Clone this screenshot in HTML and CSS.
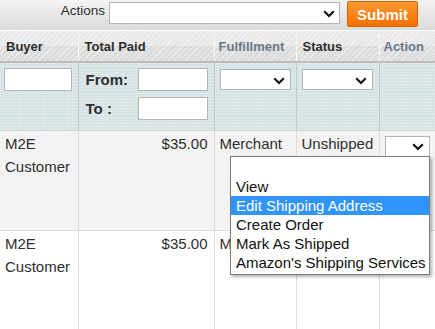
FILE: index.html
```html
<!DOCTYPE html>
<html lang="en">
<head>
    <meta charset="UTF-8">
    <title>Amazon Orders</title>
    <link rel="stylesheet" href="styles.css">
</head>
<body>
    <div class="toolbar">
        <span class="toolbar-label">Actions</span>
        <div class="select select-wide">
            <svg class="chevron" width="12" height="8" viewBox="0 0 12 8"><path d="M1.2 1.2 L6 6 L10.8 1.2" fill="none" stroke="#111" stroke-width="2.2"/></svg>
        </div>
        <button class="submit">Submit</button>
    </div>

    <div class="grid-wrap">
        <table class="grid">
            <colgroup>
                <col style="width: 78px">
                <col style="width: 136px">
                <col style="width: 82px">
                <col style="width: 83px">
                <col style="width: 56px">
            </colgroup>
            <thead>
                <tr class="headings">
                    <th>Buyer</th>
                    <th>Total Paid</th>
                    <th class="no-sort">Fulfillment</th>
                    <th>Status</th>
                    <th class="no-sort">Action</th>
                </tr>
                <tr class="filter">
                    <td><div class="input input-buyer"></div></td>
                    <td>
                        <div class="range">
                            <span class="range-label">From:</span>
                            <div class="input input-range"></div>
                            <span class="range-label">To :</span>
                            <div class="input input-range"></div>
                        </div>
                    </td>
                    <td class="pad-sm"><div class="select select-filter">
                        <svg class="chevron" width="12" height="8" viewBox="0 0 12 8"><path d="M1.2 1.2 L6 6 L10.8 1.2" fill="none" stroke="#111" stroke-width="2.2"/></svg>
                    </div></td>
                    <td class="pad-sm"><div class="select select-filter">
                        <svg class="chevron" width="12" height="8" viewBox="0 0 12 8"><path d="M1.2 1.2 L6 6 L10.8 1.2" fill="none" stroke="#111" stroke-width="2.2"/></svg>
                    </div></td>
                    <td></td>
                </tr>
            </thead>
            <tbody>
                <tr class="row row-even">
                    <td>M2E<br>Customer</td>
                    <td class="num">$35.00</td>
                    <td>Merchant</td>
                    <td>Unshipped</td>
                    <td class="pad-sm"><div class="select select-action">
                        <svg class="chevron" width="12" height="8" viewBox="0 0 12 8"><path d="M1.2 1.2 L6 6 L10.8 1.2" fill="none" stroke="#111" stroke-width="2.2"/></svg>
                    </div></td>
                </tr>
                <tr class="row">
                    <td>M2E<br>Customer</td>
                    <td class="num">$35.00</td>
                    <td>Merchant</td>
                    <td>Unshipped</td>
                    <td></td>
                </tr>
            </tbody>
        </table>

        <ul class="menu">
            <li class="menu-item">&nbsp;</li>
            <li class="menu-item">View</li>
            <li class="menu-item active">Edit Shipping Address</li>
            <li class="menu-item">Create Order</li>
            <li class="menu-item">Mark As Shipped</li>
            <li class="menu-item">Amazon's Shipping Services</li>
        </ul>
    </div>
</body>
</html>
```

FILE: styles.css
```css
* {
    box-sizing: border-box;
    margin: 0;
    padding: 0;
}

body {
    width: 435px;
    height: 329px;
    overflow: hidden;
    font-family: 'Liberation Sans', Arial, sans-serif;
    color: #2f2f2f;
    background: #fff;
}

/* top action bar */
.toolbar {
    height: 31px;
    display: flex;
    align-items: flex-start;
    justify-content: flex-end;
    padding: 1px 17px 0 0;
    background: linear-gradient(#f3f3f3, #dadada);
    border-bottom: 1px solid #fbfbfb;
}

.toolbar-label {
    font-size: 13.5px;
    line-height: 16px;
    margin: 2px 4px 0 0;
    color: #2f2f2f;
}

.select {
    position: relative;
    background: #fff;
    border: 1px solid #b5b5b5;
}

.chevron {
    position: absolute;
    top: 50%;
    right: 5px;
    margin-top: -3px;
}

.select-wide {
    width: 231px;
    height: 22px;
    margin: 1px 7px 0 0;
}

.select-wide .chevron {
    right: 4px;
}

.submit {
    width: 71px;
    height: 26px;
    border: 1px solid #d86200;
    border-radius: 2px;
    background: linear-gradient(#ff9a33, #f46f00);
    color: #fff;
    font-family: 'Liberation Sans', Arial, sans-serif;
    font-weight: bold;
    font-size: 15px;
}

/* grid */
.grid-wrap {
    position: relative;
}

.grid {
    width: 435px;
    table-layout: fixed;
    border-collapse: collapse;
}

.headings th {
    height: 31px;
    text-align: left;
    font-size: 13px;
    font-weight: bold;
    padding: 0 6px;
    color: #2f2f2f;
    border-left: 1px solid #f6f6f6;
    border-bottom: 2px solid #bdbdbd;
    background:
        repeating-linear-gradient(135deg, rgba(255, 255, 255, 0.45) 0 1px, transparent 1px 4px),
        linear-gradient(#e8e8e8 0 50%, #dcdcdc 50%);
    white-space: nowrap;
}

.headings th:first-child {
    border-left: none;
}

.headings th.no-sort {
    color: #6a7988;
    padding-left: 4px;
}

.filter td {
    height: 68px;
    vertical-align: top;
    padding: 5px 4px;
    border-left: 1px solid #c3c9cb;
    border-bottom: 1px solid #cfd4d5;
    background:
        repeating-linear-gradient(0deg, rgba(255, 255, 255, 0.18) 0 1px, transparent 1px 3px),
        repeating-linear-gradient(90deg, rgba(255, 255, 255, 0.18) 0 1px, transparent 1px 3px),
        #d4e1e3;
}

.filter td:first-child {
    border-left: none;
}

.input {
    background: #fff;
    border: 1px solid #b5b5b5;
    height: 23px;
}

.input-buyer {
    width: 68px;
}

.range {
    display: grid;
    grid-template-columns: 52px 70px;
    row-gap: 6px;
    padding-left: 3px;
    align-items: center;
}

.range-label {
    font-size: 15px;
    font-weight: bold;
    color: #2f2f2f;
}

.filter td.pad-sm {
    padding: 6px 5px;
}

.select-filter {
    width: 71px;
    height: 21px;
}

/* data rows */
.row td {
    height: 100px;
    vertical-align: top;
    font-size: 15px;
    line-height: 23px;
    padding: 1px 5px;
    border-left: 1px solid #dcdcdc;
    border-bottom: 1px solid #dcdcdc;
    background: #fff;
}

.row td:first-child {
    border-left: none;
}

.row-even td {
    background: #f3f3f3;
}

.row td.num {
    text-align: right;
    padding-right: 6px;
}

.row td.pad-sm {
    padding: 5px 5px;
}

.select-action {
    width: 45px;
    height: 21px;
}

/* open action menu */
.menu {
    position: absolute;
    left: 230px;
    top: 125px;
    width: 200px;
    list-style: none;
    background: #fff;
    border: 1px solid #7d7d7d;
    box-shadow: 2px 2px 3px rgba(0, 0, 0, 0.3);
    padding: 1px 0 2px;
}

.menu-item {
    height: 19px;
    line-height: 19px;
    font-size: 15px;
    padding-left: 5px;
    color: #111;
    white-space: nowrap;
}

.menu-item.active {
    background: #3094ff;
    color: #fff;
}
```
